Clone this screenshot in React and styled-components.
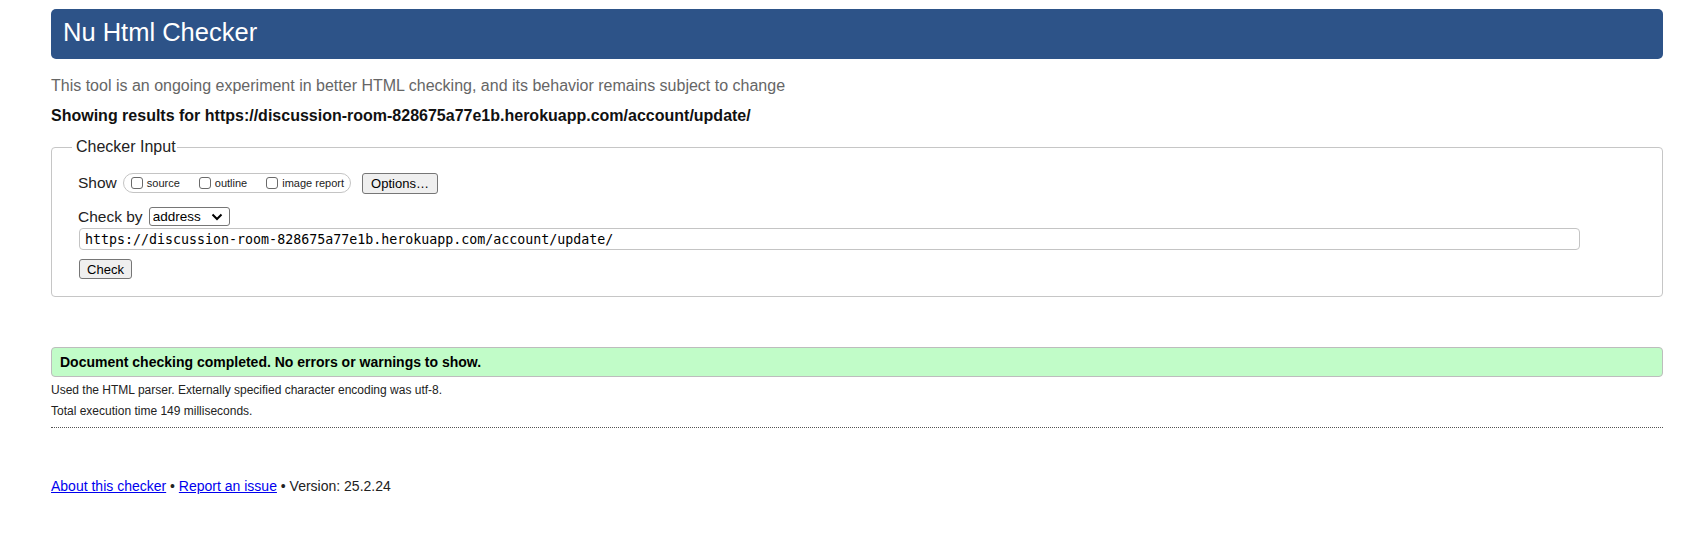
import React from 'react';
import styled, { createGlobalStyle } from 'styled-components';

const GlobalStyle = createGlobalStyle`
  body {
    margin: 0;
    background: #fff;
    color: #222;
    font-family: "Liberation Sans", Arial, sans-serif;
  }
`;

const Page = styled.div`
  display: flex;
  flex-direction: column;
  padding: 9px 20px 0 51px;
`;

const Title = styled.h1`
  margin: 0;
  padding: 0 12px 3px;
  background: #2d5388;
  color: #fff;
  font-size: 25.5px;
  font-weight: normal;
  line-height: 47px;
  border-radius: 5px;
`;

const Intro = styled.p`
  margin: 12px 0 0;
  font-size: 16px;
  line-height: 30px;
  color: #666;
`;

const ResultsFor = styled.p`
  margin: 0;
  font-size: 16px;
  font-weight: bold;
  line-height: 30px;
  color: #111;
`;

const InputBox = styled.fieldset`
  margin: 7px 0 0;
  padding: 16px 20px 17px;
  border: 1px solid #c6c6c6;
  border-radius: 4px;
  min-width: 0;
`;

const Legend = styled.legend`
  padding: 0 1px 0 4px;
  font-size: 16px;
  line-height: 18px;
  color: #222;
`;

const Row = styled.div`
  display: flex;
  align-items: center;
  height: ${(p) => p.h}px;
  margin-top: ${(p) => p.mt || 0}px;
  padding-left: 6px;
`;

const Label = styled.span`
  font-size: 15.5px;
  line-height: 22px;
  color: #222;
  margin-right: ${(p) => p.mr || 0}px;
`;

const Pill = styled.span`
  display: inline-flex;
  align-items: center;
  box-sizing: border-box;
  height: 20px;
  padding: 0 6px 0 7px;
  border: 1px solid #c4c4c4;
  border-radius: 10px;
  margin-right: 11px;
`;

const Option = styled.label`
  display: inline-flex;
  align-items: center;
  font-size: 11px;
  color: #222;
  margin-right: ${(p) => (p.last ? 0 : 19)}px;
`;

const Box = styled.input`
  appearance: none;
  box-sizing: border-box;
  width: 12px;
  height: 12px;
  margin: 0 4px 0 0;
  border: 1px solid #6a6a6a;
  border-radius: 3px;
  background: #fff;
`;

const Button = styled.button`
  box-sizing: border-box;
  width: ${(p) => p.w}px;
  height: ${(p) => p.h}px;
  padding: 0;
  font-family: "Liberation Sans", Arial, sans-serif;
  font-size: 13px;
  color: #000;
  background: #efefef;
  border: 1px solid #767676;
  border-radius: 3px;
`;

const SelectWrap = styled.span`
  position: relative;
  display: inline-flex;
  margin-left: 6px;
`;

const Select = styled.select`
  appearance: none;
  box-sizing: border-box;
  width: 81px;
  height: 19px;
  padding: 0 0 0 3px;
  font-family: "Liberation Sans", Arial, sans-serif;
  font-size: 13.5px;
  color: #000;
  background: #fff;
  border: 1px solid #767676;
  border-radius: 3px;
`;

const Chevron = styled.svg`
  position: absolute;
  right: 7px;
  top: 6px;
  pointer-events: none;
`;

const UrlInput = styled.input`
  box-sizing: border-box;
  width: 1501px;
  height: 22px;
  margin: 1px 0 0 7px;
  padding: 0 5px;
  font-family: "DejaVu Sans Mono", "Liberation Mono", monospace;
  font-size: 13.3px;
  color: #000;
  border: 1px solid #c4c4c4;
  border-radius: 4px;
`;

const CheckRow = styled.div`
  margin: 9px 0 0 7px;
  display: flex;
`;

const Success = styled.p`
  margin: 50px 0 0;
  padding: 0 8px;
  font-size: 14px;
  font-weight: bold;
  line-height: 28px;
  color: #000;
  background: #c1fcc8;
  border: 1px solid #bdbdbd;
  border-radius: 4px;
`;

const Details = styled.div`
  margin-top: 3px;
  padding-bottom: 5px;
  border-bottom: 1px dotted #555;
`;

const Detail = styled.p`
  margin: 0;
  font-size: 12px;
  line-height: 21px;
  color: #222;
`;

const Footer = styled.p`
  margin: 48px 0 0;
  font-size: 14px;
  line-height: 20px;
  color: #222;
`;

const Link = styled.a`
  color: #0000ee;
  text-decoration: underline;
`;

const url = 'https://discussion-room-828675a77e1b.herokuapp.com/account/update/';

export default function App() {
  return (
    <>
      <GlobalStyle />
      <Page>
        <Title>Nu Html Checker</Title>
        <Intro>This tool is an ongoing experiment in better HTML checking, and its behavior remains subject to change</Intro>
        <ResultsFor>Showing results for {url}</ResultsFor>
        <InputBox>
          <Legend>Checker Input</Legend>
          <Row h={22}>
            <Label mr={6}>Show</Label>
            <Pill>
              <Option><Box type="checkbox" />source</Option>
              <Option><Box type="checkbox" />outline</Option>
              <Option last><Box type="checkbox" />image report</Option>
            </Pill>
            <Button type="button" w={76} h={21}>Options…</Button>
          </Row>
          <Row h={21} mt={12}>
            <Label>Check by</Label>
            <SelectWrap>
              <Select defaultValue="address">
                <option value="address">address</option>
              </Select>
              <Chevron width="12" height="8" viewBox="0 0 12 8">
                <polyline points="1.5,1.5 6,6 10.5,1.5" fill="none" stroke="#000" strokeWidth="2" />
              </Chevron>
            </SelectWrap>
          </Row>
          <UrlInput type="text" defaultValue={url} />
          <CheckRow>
            <Button type="button" w={53} h={20}>Check</Button>
          </CheckRow>
        </InputBox>
        <Success>Document checking completed. No errors or warnings to show.</Success>
        <Details>
          <Detail>Used the HTML parser. Externally specified character encoding was utf-8.</Detail>
          <Detail>Total execution time 149 milliseconds.</Detail>
        </Details>
        <Footer>
          <Link href="#">About this checker</Link> • <Link href="#">Report an issue</Link> • Version: 25.2.24
        </Footer>
      </Page>
    </>
  );
}
